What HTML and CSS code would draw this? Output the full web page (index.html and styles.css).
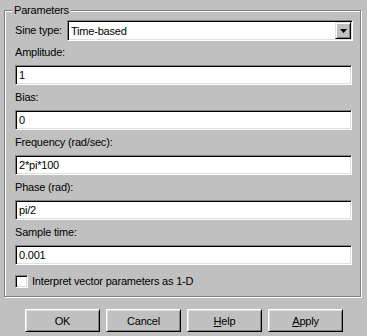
FILE: index.html
```html
<!DOCTYPE html>
<html>
<head>
<meta charset="utf-8">
<link rel="stylesheet" href="styles.css">
</head>
<body>
<div class="dialog">
  <div class="group">
    <div class="legend">Parameters</div>
    <div class="sine-row">
      <span class="sine-label">Sine type:</span>
      <div class="combo">
        <span class="combo-text">Time-based</span>
        <span class="combo-btn"><svg width="7" height="4" viewBox="0 0 7 4"><polygon points="0,0 7,0 3.5,4" fill="#000"/></svg></span>
      </div>
    </div>
    <div class="field"><div class="label">Amplitude:</div><div class="input">1</div></div>
    <div class="field"><div class="label">Bias:</div><div class="input">0</div></div>
    <div class="field"><div class="label">Frequency (rad/sec):</div><div class="input">2*pi*100</div></div>
    <div class="field"><div class="label">Phase (rad):</div><div class="input">pi/2</div></div>
    <div class="field"><div class="label">Sample time:</div><div class="input">0.001</div></div>
    <div class="check-row"><span class="checkbox"></span><span>Interpret vector parameters as 1-D</span></div>
  </div>
  <div class="buttons">
    <div class="btn">OK</div>
    <div class="btn">Cancel</div>
    <div class="btn"><u>H</u>elp</div>
    <div class="btn"><u>A</u>pply</div>
  </div>
</div>
</body>
</html>
```
FILE: styles.css
```css
html, body {
  margin: 0;
  padding: 0;
  background: #c0c0c0;
}
body {
  width: 367px;
  height: 336px;
  overflow: hidden;
  font-family: "Liberation Sans", Arial, sans-serif;
  font-size: 11px;
  letter-spacing: -0.2px;
  color: #000;
}
.dialog {
  display: flex;
  flex-direction: column;
}
.group {
  position: relative;
  box-sizing: border-box;
  margin: 10px 0 0 4px;
  width: 357px;
  height: 287px;
  border: 1px solid #808080;
  box-shadow: inset 1px 1px 0 #fff, 1px 1px 0 #fff;
  padding: 9px 8px 0 10px;
}
.legend {
  position: absolute;
  top: -7px;
  left: 7px;
  padding: 0 2px;
  line-height: 13px;
  background: #c0c0c0;
}
.sine-row {
  display: flex;
  align-items: center;
  height: 21px;
}
.sine-label {
  width: 52px;
  line-height: 13px;
}
.combo {
  flex: 1;
  box-sizing: border-box;
  height: 21px;
  margin-right: -1px;
  display: flex;
  align-items: center;
  background: #fff;
  border: 1px solid;
  border-color: #808080 #fff #fff #808080;
  box-shadow: inset 1px 1px 0 #000, inset -1px -1px 0 #dfdfdf;
  padding: 1px;
}
.combo-text {
  flex: 1;
  padding-left: 2px;
}
.combo-btn {
  box-sizing: border-box;
  width: 16px;
  height: 17px;
  display: flex;
  align-items: center;
  justify-content: center;
  background: #c0c0c0;
  border: 1px solid;
  border-color: #dfdfdf #000 #000 #dfdfdf;
  box-shadow: inset 1px 1px 0 #fff, inset -1px -1px 0 #808080;
}
.field .label {
  line-height: 13px;
  margin: 5px 0 6px;
}
.field + .field .label {
  margin-top: 6px;
}
.input {
  box-sizing: border-box;
  height: 20px;
  line-height: 16px;
  background: #fff;
  border: 1px solid;
  border-color: #808080 #fff #fff #808080;
  box-shadow: inset 1px 1px 0 #000, inset -1px -1px 0 #dfdfdf;
  padding: 1px 1px 1px 3px;
}
.check-row {
  display: flex;
  align-items: center;
  gap: 4px;
  margin-top: 10px;
  line-height: 13px;
}
.checkbox {
  box-sizing: border-box;
  width: 13px;
  height: 13px;
  background: #fff;
  border: 1px solid;
  border-color: #808080 #fff #fff #808080;
  box-shadow: inset 1px 1px 0 #000, inset -1px -1px 0 #dfdfdf;
}
.buttons {
  display: flex;
  gap: 6px;
  margin: 12px 0 0 25px;
}
.btn {
  box-sizing: border-box;
  width: 75px;
  height: 23px;
  display: flex;
  align-items: center;
  justify-content: center;
  background: #c0c0c0;
  border: 1px solid;
  border-color: #fff #000 #000 #fff;
  box-shadow: inset 1px 1px 0 #dfdfdf, inset -1px -1px 0 #808080;
}
.btn u {
  text-decoration-thickness: 1px;
  text-underline-offset: 1px;
}
```
